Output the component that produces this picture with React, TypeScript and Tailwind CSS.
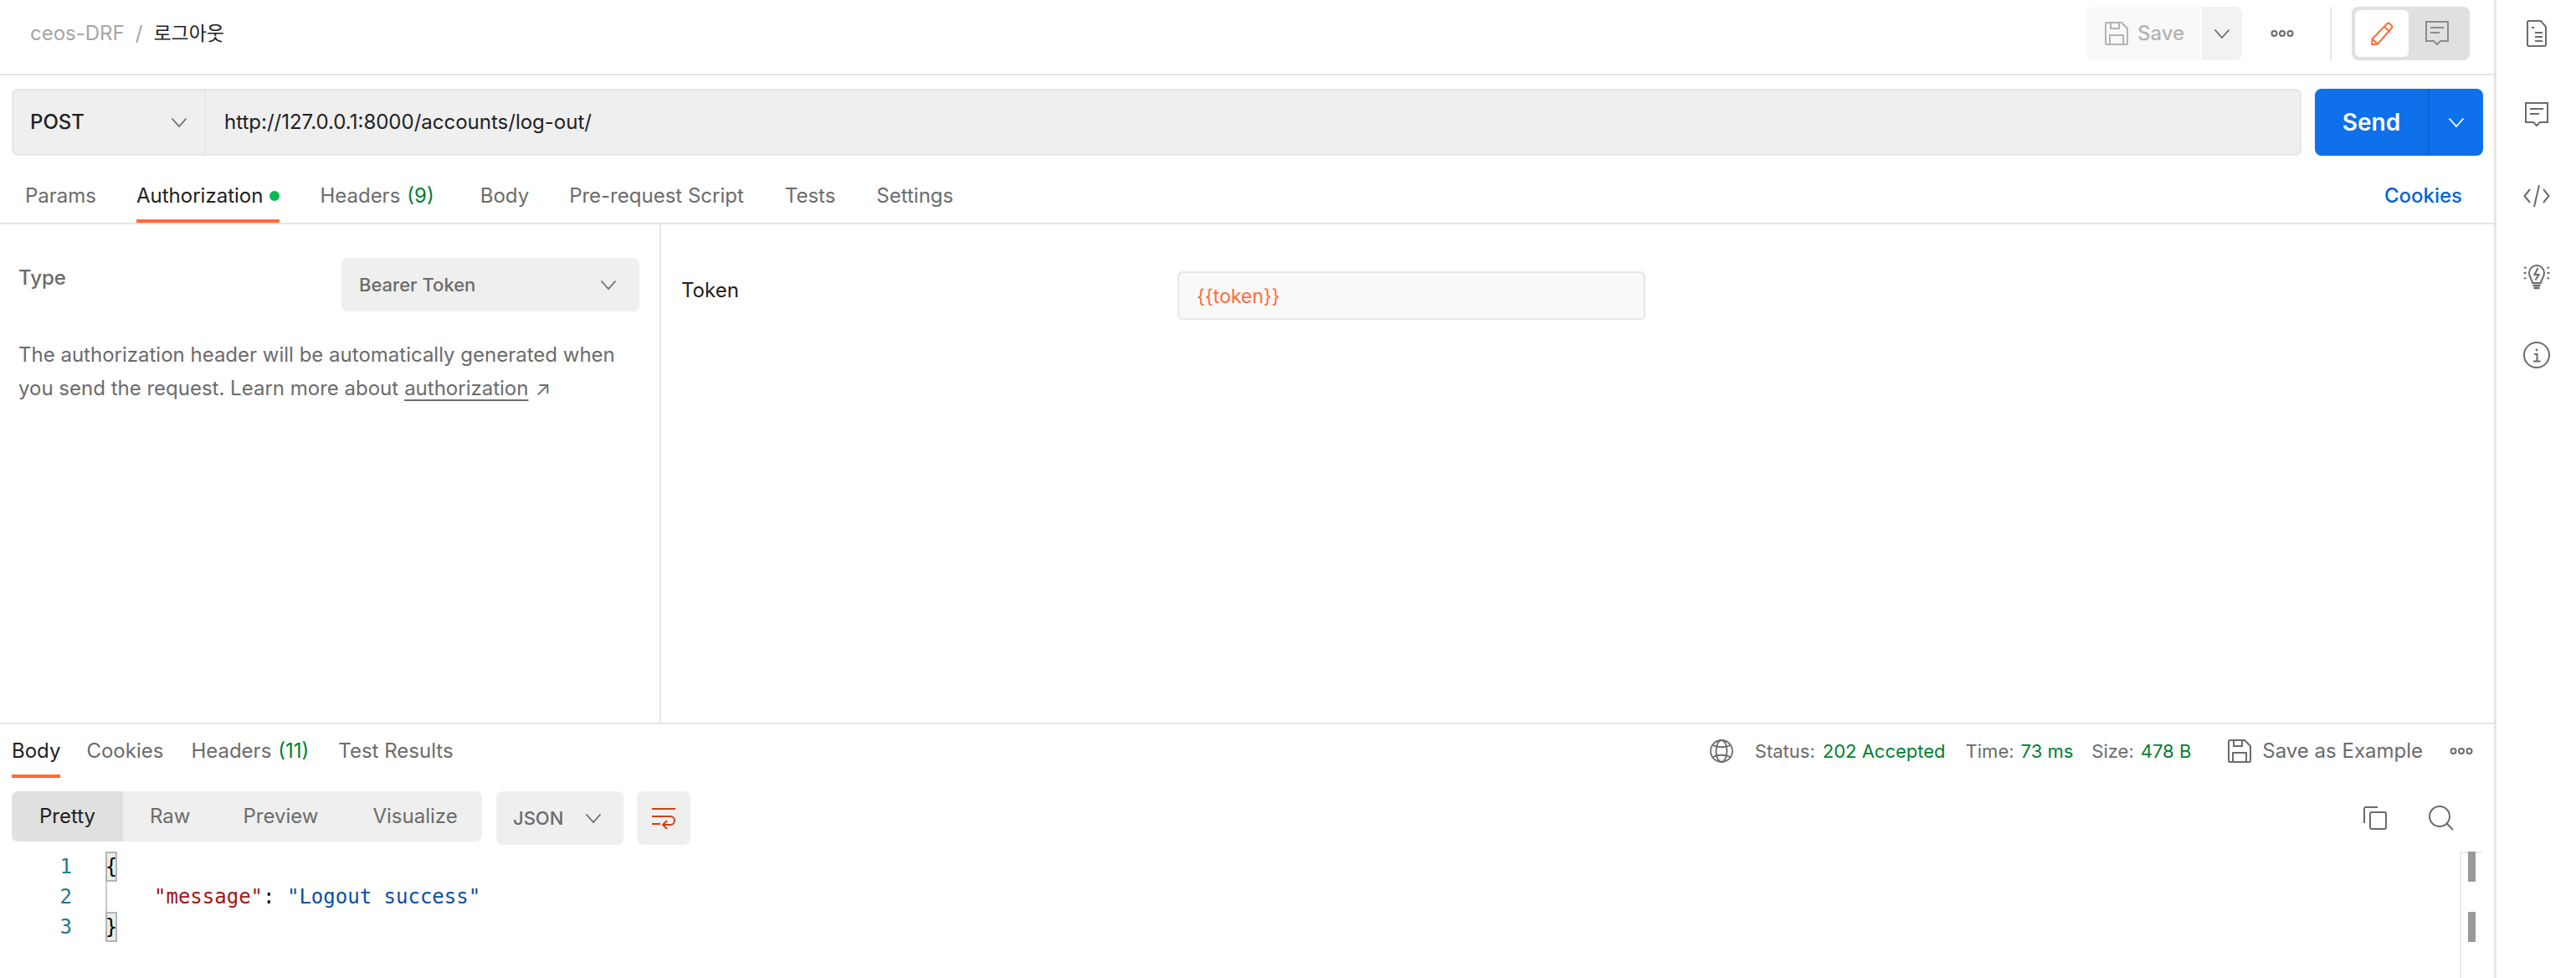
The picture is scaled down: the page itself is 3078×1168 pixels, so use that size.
import React from 'react';

const Chevron = ({ className }: { className?: string }) => (
  <svg viewBox="0 0 20 20" className={className} fill="none" stroke="currentColor" strokeWidth="1.800">
    <path d="M1.500 5.500 10 15l8.500-9.500" />
  </svg>
);

const Dots = ({ className }: { className?: string }) => (
  <svg viewBox="0 0 28 10" className={className} fill="none" stroke="currentColor" strokeWidth="2">
    <circle cx="4.500" cy="5" r="3" />
    <circle cx="14" cy="5" r="3" />
    <circle cx="23.500" cy="5" r="3" />
  </svg>
);

const SaveIcon = ({ className }: { className?: string }) => (
  <svg viewBox="0 0 28 28" className={className} fill="none" stroke="currentColor" strokeWidth="2">
    <path d="M1 2.500a1.500 1.500 0 0 1 1.500-1.500H20l7 7v17.500a1.500 1.500 0 0 1-1.500 1.500h-23A1.500 1.500 0 0 1 1 25.500z" />
    <path d="M7 1v7h10V1M6 27V16h16v11" />
  </svg>
);

const CommentIcon = ({ className }: { className?: string }) => (
  <svg viewBox="0 0 28 30" className={className} fill="none" stroke="currentColor" strokeWidth="2">
    <path d="M1 1h26v23h-9l-4 4-4-4H1z" />
    <path d="M6 8h16M6 14h11" />
  </svg>
);

const DocIcon = ({ className }: { className?: string }) => (
  <svg viewBox="0 0 24 32" className={className} fill="none" stroke="currentColor" strokeWidth="2">
    <path d="M2.500 1H17l6 7v21.500a1.500 1.500 0 0 1-1.500 1.500h-19A1.500 1.500 0 0 1 1 29.500v-27A1.500 1.500 0 0 1 2.500 1z" />
    <path d="M6 9h3M10 15h9M10 20h9M10 25h9" />
  </svg>
);

const CodeIcon = ({ className }: { className?: string }) => (
  <svg viewBox="0 0 32 32" className={className} fill="none" stroke="currentColor" strokeWidth="2">
    <path d="M8 8 1.500 16 8 24M24 8l6.500 8L24 24M19 3l-6 26" />
  </svg>
);

const BulbIcon = ({ className }: { className?: string }) => (
  <svg viewBox="0 0 32 32" className={className} fill="none" stroke="currentColor" strokeWidth="2">
    <path d="M11 24c0-4-4-6-4-12a9 9 0 0 1 18 0c0 6-4 8-4 12z" />
    <path d="M11.500 27h9M12.500 30h7" strokeWidth="2.400" />
    <path d="M17.500 6 13.500 14h5l-4 6.500" />
    <path d="M1 5l2.500 1.500M1 19l2.500-1.500M0.500 12h3M31 5l-2.500 1.500M31 19l-2.500-1.500M31.500 12h-3" />
  </svg>
);

const InfoIcon = ({ className }: { className?: string }) => (
  <svg viewBox="0 0 32 32" className={className} fill="none" stroke="currentColor" strokeWidth="2">
    <circle cx="16" cy="16" r="15" />
    <circle cx="16" cy="10" r="1.400" fill="currentColor" stroke="none" />
    <path d="M13 15h3.500v8.500M12 23.500h8.500" />
  </svg>
);

const GlobeIcon = ({ className }: { className?: string }) => (
  <svg viewBox="0 0 28 28" className={className} fill="none" stroke="currentColor" strokeWidth="1.800">
    <circle cx="14" cy="14" r="13" />
    <ellipse cx="14" cy="14" rx="6.500" ry="13" />
    <path d="M3.500 7c6 3 15 3 21 0M3.500 21c6-3 15-3 21 0" />
  </svg>
);

const CopyIcon = ({ className }: { className?: string }) => (
  <svg viewBox="0 0 28 28" className={className} fill="none" stroke="currentColor" strokeWidth="2">
    <path d="M1 20V3a2 2 0 0 1 2-2h14" />
    <rect x="8" y="7" width="19" height="20" rx="2" />
  </svg>
);

const SearchIcon = ({ className }: { className?: string }) => (
  <svg viewBox="0 0 30 30" className={className} fill="none" stroke="currentColor" strokeWidth="2">
    <circle cx="13" cy="13" r="12" />
    <path d="m21.500 21.500 7.500 7.500" />
  </svg>
);

const WrapIcon = ({ className }: { className?: string }) => (
  <svg viewBox="0 0 28 28" className={className} fill="none" stroke="currentColor" strokeWidth="2">
    <path d="M0 3h28M0 12h22a4.500 4.500 0 0 1 0 10h-8M0 21h10" />
    <path d="m18 17-5 5 5 5" />
  </svg>
);

const PencilIcon = ({ className }: { className?: string }) => (
  <svg viewBox="0 0 28 28" className={className} fill="none" stroke="currentColor" strokeWidth="2">
    <path d="M20 2.500a2.500 2.500 0 0 1 3.500 0l2 1.800a2.500 2.500 0 0 1 0 3.500L9 26.500l-7 1 .5-7z" />
    <path d="m17 6 6.500 6M2.500 20.500 9 26.500" />
  </svg>
);

const Tab = ({ active, children, className }: { active?: boolean; children: React.ReactNode; className?: string }) => (
  <div className={`flex h-[52px] items-start border-b-4 leading-[40px] ${active ? 'border-[#ff6c37] text-[#212121]' : 'border-transparent text-[#6b6b6b]'} ${className ?? ''}`}>
    {children}
  </div>
);

export default function App() {
  return (
    <div className="flex h-[1168px] w-full overflow-hidden bg-white font-['Inter','Noto_Sans_CJK_KR',sans-serif] text-[24px] text-[#212121]">
      <div className="flex w-[2980px] flex-col">
        {/* top bar */}
        <div className="flex h-[90px] shrink-0 items-start justify-between border-b-2 border-[#e6e6e6] pl-[36px] pr-[29px]">
          <div className="flex h-[80px] items-center text-[24px]">
            <span className="text-[#a6a6a6]">ceos-DRF</span>
            <span className="ml-[13px] text-[#a6a6a6]">/</span>
            <span className="ml-[13px] text-[23px] text-[#212121]">로그아웃</span>
          </div>
          <div className="flex items-start pt-[8px]">
            <div className="flex h-[64px] w-[136px] items-center rounded-l-lg bg-[#f9f9f9] pl-[22px] font-medium text-[#b3b3b3]">
              <SaveIcon className="h-[28px] w-[28px]" />
              <span className="ml-[11px]">Save</span>
            </div>
            <div className="ml-[2px] flex h-[64px] w-[48px] items-center justify-center rounded-r-lg bg-[#f2f2f2] text-[#6b6b6b]">
              <Chevron className="h-[20px] w-[20px]" />
            </div>
            <div className="flex h-[64px] w-[96px] items-center justify-center text-[#6b6b6b]">
              <Dots className="h-[10px] w-[28px]" />
            </div>
            <div className="ml-[9px] h-[64px] w-[2px] bg-[#e6e6e6]" />
            <div className="ml-[24px] flex h-[64px] w-[141px] items-center rounded-lg bg-[#e0e0e0] pl-[4px]">
              <div className="flex h-[56px] w-[64px] items-center justify-center rounded-md bg-white text-[#ff6c37]">
                <PencilIcon className="h-[28px] w-[28px]" />
              </div>
              <div className="ml-[20px] text-[#8c8c8c]">
                <CommentIcon className="h-[30px] w-[28px]" />
              </div>
            </div>
          </div>
        </div>

        {/* url bar */}
        <div className="flex shrink-0 items-start pl-[14px] pr-[13px] pt-[16px]">
          <div className="flex h-[80px] flex-1 rounded-lg border-2 border-[#e6e6e6] bg-[#efefef]">
            <div className="flex w-[230px] items-center justify-between border-r-2 border-[#e6e6e6] pl-[20px] pr-[20px]">
              <span className="font-medium">POST</span>
              <Chevron className="h-[20px] w-[20px] text-[#6b6b6b]" />
            </div>
            <div className="flex flex-1 items-center pl-[22px]">http://127.0.0.1:8000/accounts/log-out/</div>
          </div>
          <div className="ml-[16px] flex h-[80px] w-[201px] rounded-lg bg-[#0e71eb] text-white">
            <div className="flex w-[135px] items-center justify-center text-[28px] font-semibold">Send</div>
            <div className="flex flex-1 items-center justify-center border-l-2 border-[#0c66d6]">
              <Chevron className="h-[20px] w-[20px]" />
            </div>
          </div>
        </div>

        {/* request tabs */}
        <div className="flex h-[82px] shrink-0 items-end justify-between border-b-2 border-[#e6e6e6] pl-[30px] pr-[38px]">
          <div className="flex items-end gap-[48px]">
            <Tab>Params</Tab>
            <Tab active>
              Authorization
              <span className="ml-[8px] mt-[14px] h-[12px] w-[12px] rounded-full bg-[#0cbb52]" />
            </Tab>
            <Tab className="mr-[7px]">
              Headers<span className="ml-[8px] text-[#007f31]">(9)</span>
            </Tab>
            <Tab>Body</Tab>
            <Tab>Pre-request Script</Tab>
            <Tab className="ml-[1px]">Tests</Tab>
            <Tab className="ml-[1px]">Settings</Tab>
          </div>
          <div className="flex h-[52px] items-start font-medium leading-[40px] text-[#0265d2]">Cookies</div>
        </div>

        {/* auth panel */}
        <div className="flex h-[597px] shrink-0 border-b-2 border-[#e6e6e6]">
          <div className="w-[790px] border-r-2 border-[#e6e6e6] pl-[22px] pr-[24px] pt-[40px]">
            <div className="flex items-start justify-between">
              <span className="font-medium leading-[48px] text-[#6b6b6b]">Type</span>
              <div className="flex h-[64px] w-[356px] items-center justify-between rounded-lg bg-[#efefef] pl-[21px] pr-[27px] text-[22px] font-medium text-[#6b6b6b]">
                Bearer Token
                <Chevron className="h-[20px] w-[20px]" />
              </div>
            </div>
            <div className="mt-[32px] leading-[40px] text-[#6b6b6b]">
              <div>The authorization header will be automatically generated when</div>
              <div className="flex">
                <span>you send the request. Learn more about</span>
                <span className="ml-[7px] underline underline-offset-[5px]">authorization</span>
                <span className="ml-[8px]">↗</span>
              </div>
            </div>
          </div>
          <div className="flex items-start pl-[24px] pt-[56px]">
            <span className="w-[593px] leading-[46px]">Token</span>
            <div className="flex h-[58px] w-[559px] items-center rounded-md border-2 border-[#e6e6e6] bg-[#f9f9f9] pl-[21px] pt-[2px] text-[23px] text-[#ff6c37]">
              {'{{token}}'}
            </div>
          </div>
        </div>

        {/* response */}
        <div className="flex h-[64px] shrink-0 items-start justify-between pl-[14px] pr-[25px] pt-[12px]">
          <div className="flex">
            <Tab active>Body</Tab>
            <Tab className="ml-[31px]">Cookies</Tab>
            <Tab className="ml-[33px]">
              Headers<span className="ml-[8px] text-[#007f31]">(11)</span>
            </Tab>
            <Tab className="ml-[35px]">Test Results</Tab>
          </div>
          <div className="flex h-[40px] items-center text-[22px] text-[#6b6b6b]">
            <GlobeIcon className="h-[28px] w-[28px]" />
            <span className="ml-[26px]">Status:</span>
            <span className="ml-[9px] text-[#007f31]">202 Accepted</span>
            <span className="ml-[24px]">Time:</span>
            <span className="ml-[8px] text-[#007f31]">73 ms</span>
            <span className="ml-[22px]">Size:</span>
            <span className="ml-[8px] text-[#007f31]">478 B</span>
            <SaveIcon className="ml-[44px] h-[28px] w-[28px]" />
            <span className="ml-[13px] text-[24px]">Save as Example</span>
            <Dots className="ml-[32px] h-[10px] w-[28px]" />
          </div>
        </div>

        <div className="mt-[16px] flex h-[64px] shrink-0 items-start pl-[14px] pr-[48px]">
          <div className="flex h-[60px] w-[562px] items-center overflow-hidden rounded-lg bg-[#efefef] text-[#6b6b6b]">
            <div className="flex h-full w-[133px] items-center justify-center bg-[#e0e0e0] text-[#212121]">Pretty</div>
            <span className="ml-[32px]">Raw</span>
            <span className="ml-[63px]">Preview</span>
            <span className="ml-[65px]">Visualize</span>
          </div>
          <div className="ml-[17px] flex h-[64px] w-[152px] items-center justify-between rounded-lg bg-[#efefef] pl-[20px] pr-[26px] text-[22px] font-medium text-[#6b6b6b]">
            JSON
            <Chevron className="h-[20px] w-[20px]" />
          </div>
          <div className="ml-[16px] flex h-[64px] w-[64px] items-center justify-center rounded-lg bg-[#efefef] text-[#d23f0e]">
            <WrapIcon className="h-[28px] w-[28px]" />
          </div>
          <div className="ml-auto flex h-[64px] items-center text-[#6b6b6b]">
            <CopyIcon className="h-[28px] w-[28px]" />
            <SearchIcon className="ml-[50px] h-[30px] w-[30px]" />
          </div>
        </div>

        <div className="mt-[8px] flex flex-1 pr-[14px] font-['DejaVu_Sans_Mono',monospace] text-[24px] leading-[36px]">
          <div className="flex-1">
            <div className="flex h-[36px]">
              <span className="w-[86px] text-right text-[#237893]">1</span>
              <span className="ml-[40px] flex h-[36px] w-[14px] items-center justify-center overflow-hidden border-2 border-[#b4b4b4] bg-[#e6efe6] text-black">{'{'}</span>
            </div>
            <div className="flex h-[36px]">
              <span className="w-[86px] text-right text-[#237893]">2</span>
              <span className="ml-[40px] border-l-2 border-[#c8c8c8] pl-[56px]">
                <span className="text-[#a31515]">"message"</span>
                <span className="text-black">: </span>
                <span className="text-[#0451a5]">"Logout success"</span>
              </span>
            </div>
            <div className="flex h-[36px]">
              <span className="w-[86px] text-right text-[#237893]">3</span>
              <span className="ml-[40px] flex h-[36px] w-[14px] items-center justify-center overflow-hidden border-2 border-[#b4b4b4] bg-[#e6efe6] text-black">{'}'}</span>
            </div>
          </div>
          <div className="w-[27px] border-l-2 border-t-2 border-[#ececec] pl-[8px]">
            <div className="-mt-[2px] h-[36px] w-[9px] bg-[#999999]" />
            <div className="mt-[36px] h-[36px] w-[9px] bg-[#999999]" />
          </div>
        </div>
      </div>

      {/* right rail */}
      <div className="flex flex-1 flex-col items-center border-l-[3px] border-[#e6e6e6] pt-[24px] text-[#6b6b6b]">
        <DocIcon className="h-[32px] w-[24px]" />
        <CommentIcon className="mt-[66px] h-[30px] w-[28px]" />
        <CodeIcon className="mt-[66px] h-[32px] w-[32px]" />
        <BulbIcon className="mt-[64px] h-[32px] w-[32px]" />
        <InfoIcon className="mt-[62px] h-[32px] w-[32px]" />
      </div>
    </div>
  );
}
